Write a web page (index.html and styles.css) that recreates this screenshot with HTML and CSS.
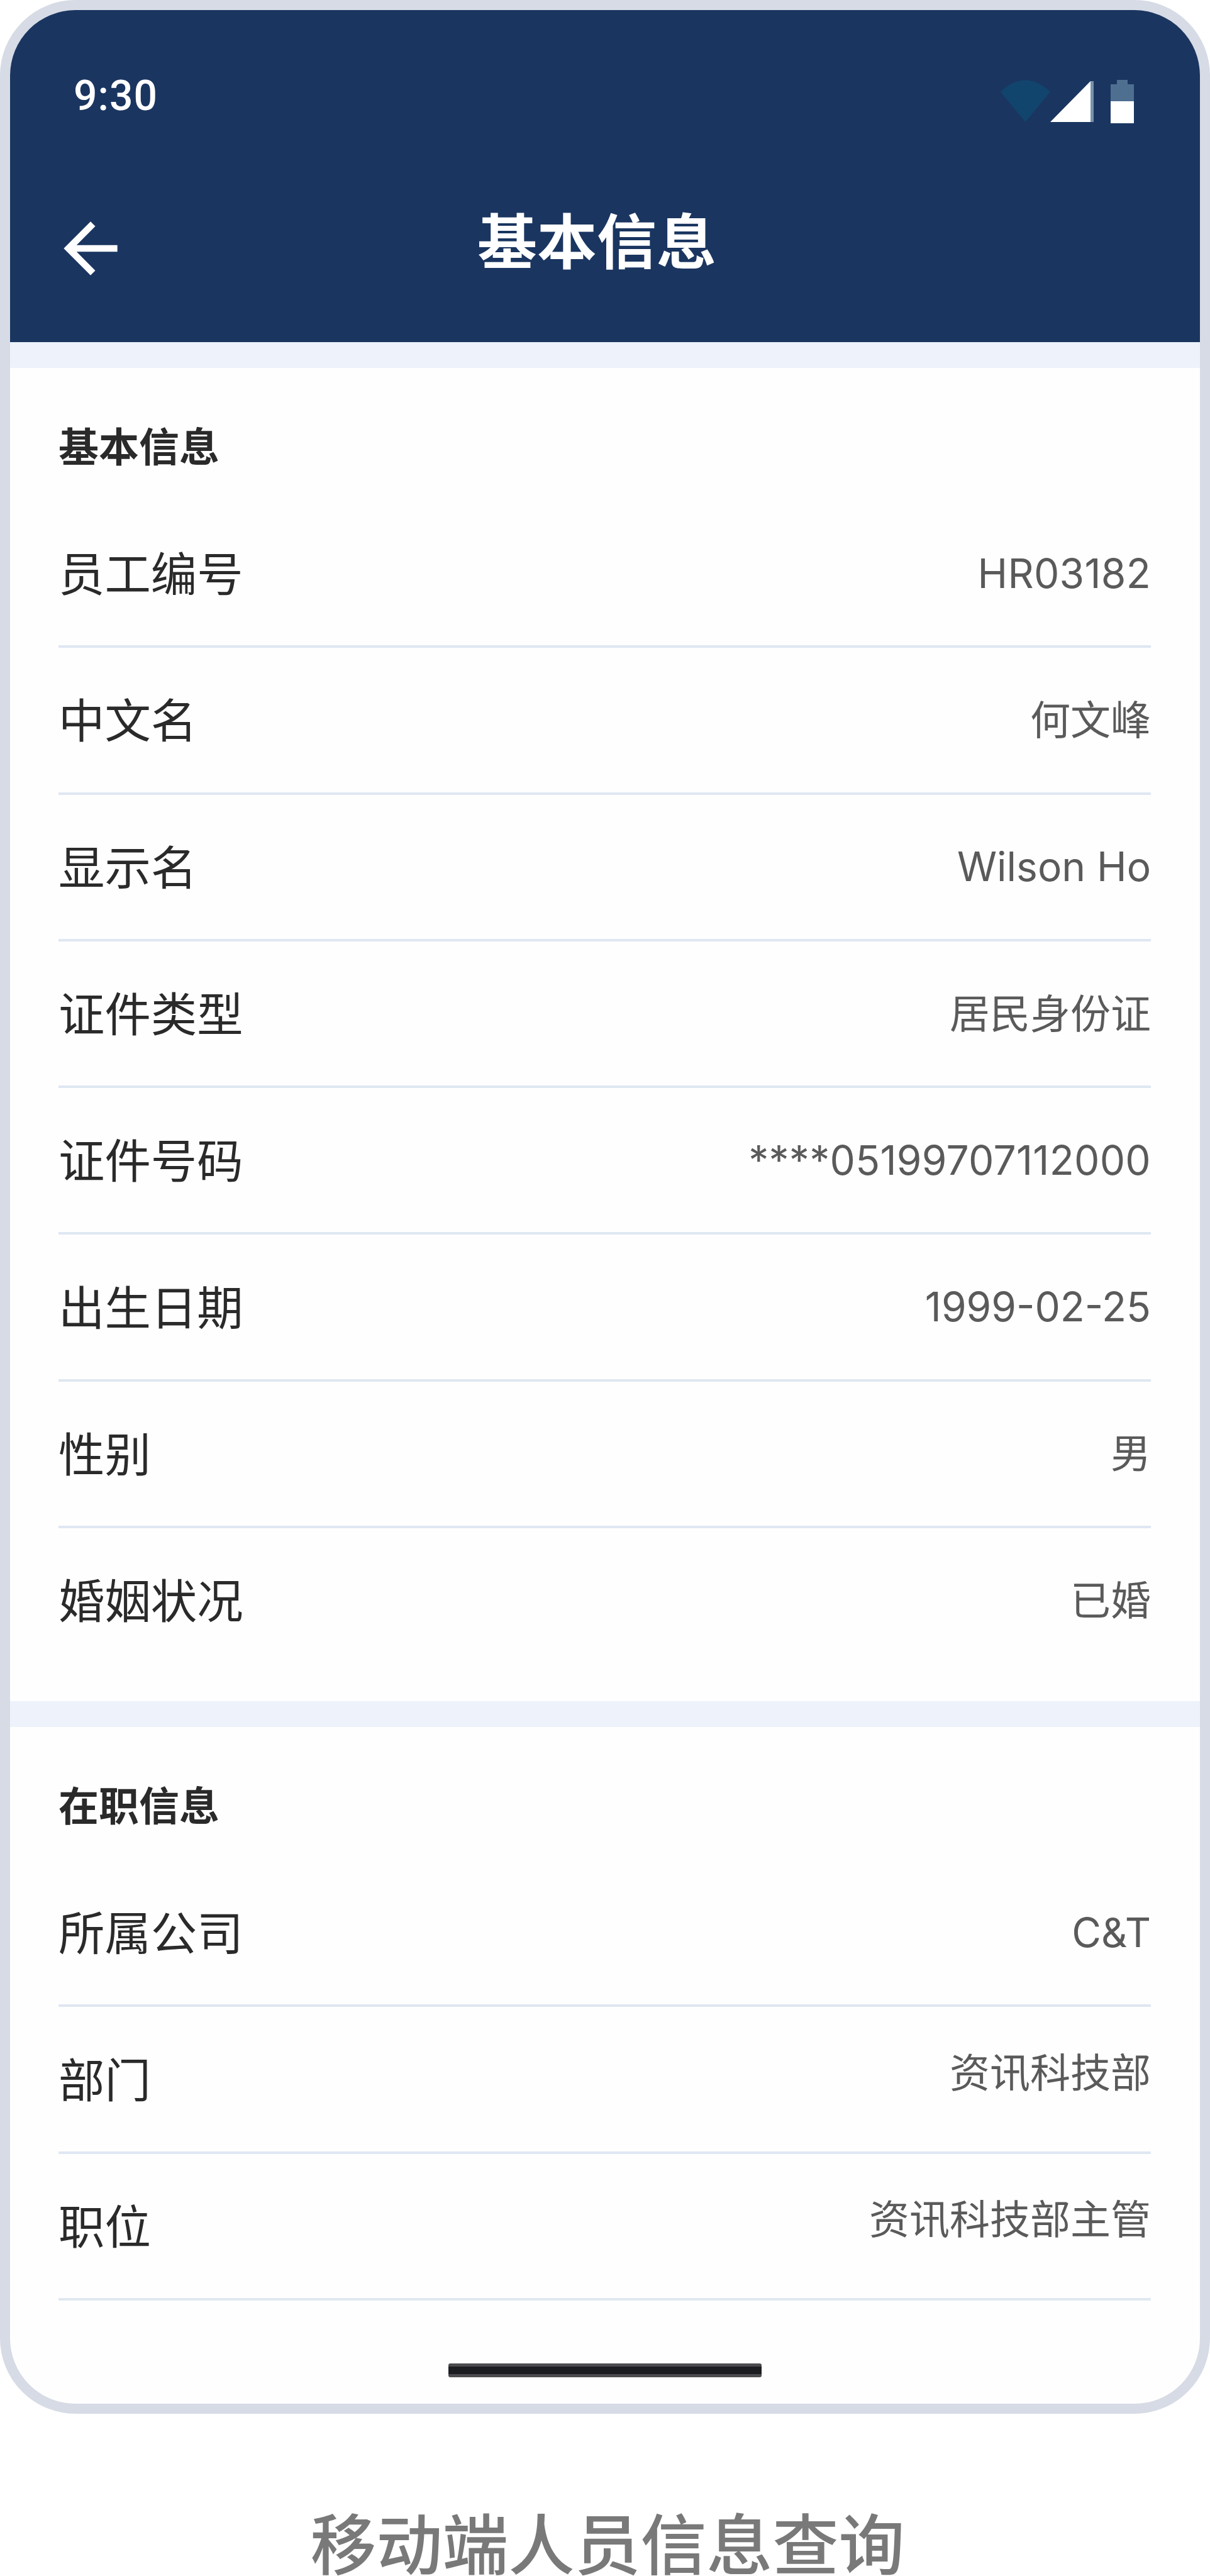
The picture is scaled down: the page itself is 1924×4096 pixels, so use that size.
FILE: index.html
```html
<!DOCTYPE html>
<html lang="zh-CN">
<head>
<meta charset="utf-8">
<title>基本信息</title>
<link rel="stylesheet" href="styles.css">
</head>
<body>
<main class="phone">
  <header class="header">
    <div class="status">
      <span class="clock">9:30</span>
      <svg class="status-icons" viewBox="0 0 214 72" width="214" height="72">
        <path fill="#12456e" d="M0 20Q39 -17 79 20L39.500 68Z"/>
        <path fill="#fff" d="M79 68L143 3V68Z"/>
        <path fill="#7892ab" d="M143 3h5v65h-5z"/>
        <path fill="#4f6f91" d="M185 1h17v7h10v28h-37V8h10z"/>
        <path fill="#fff" d="M175 35h37v35h-37z"/>
      </svg>
    </div>
    <div class="appbar">
      <svg class="back" viewBox="0 0 24 24" width="128" height="128"><path fill="#fff" d="M20 11H7.830l5.590-5.590L12 4l-8 8 8 8 1.410-1.410L7.830 13H20z"/></svg>
      <h1 class="title">基本信息</h1>
    </div>
  </header>
  <section class="section">
    <h2 class="heading">基本信息</h2>
    <dl class="list">
      <div class="row"><dt>员工编号</dt><dd class="numeric">HR03182</dd></div>
      <div class="row"><dt>中文名</dt><dd>何文峰</dd></div>
      <div class="row"><dt>显示名</dt><dd>Wilson Ho</dd></div>
      <div class="row"><dt>证件类型</dt><dd>居民身份证</dd></div>
      <div class="row"><dt>证件号码</dt><dd class="numeric">****05199707112000</dd></div>
      <div class="row"><dt>出生日期</dt><dd>1999-02-25</dd></div>
      <div class="row"><dt>性别</dt><dd>男</dd></div>
      <div class="row row-last"><dt>婚姻状况</dt><dd>已婚</dd></div>
    </dl>
  </section>
  <section class="section">
    <h2 class="heading">在职信息</h2>
    <dl class="list">
      <div class="row"><dt>所属公司</dt><dd>C&amp;T</dd></div>
      <div class="row"><dt>部门</dt><dd class="raised">资讯科技部</dd></div>
      <div class="row"><dt>职位</dt><dd class="raised">资讯科技部主管</dd></div>
    </dl>
  </section>
  <div class="home-bar"></div>
</main>
<p class="caption">移动端人员信息查询</p>
</body>
</html>
```
FILE: styles.css
```css
* { box-sizing: border-box; margin: 0; padding: 0; }
html, body { width: 1924px; height: 4096px; overflow: hidden; }
body { background: #fff; font-family: Inter, "Noto Sans CJK SC", sans-serif; }
.phone {
  width: 1924px; height: 3838px;
  display: flex; flex-direction: column;
  border: 16px solid #d6dbe5; border-radius: 120px;
  background: #fefefe; overflow: hidden;
}
.header { height: 528px; flex: none; background: #1a3560; color: #fff; }
.status {
  display: flex; justify-content: space-between; align-items: flex-start;
  padding: 97px 103px 0 101px; height: 290px;
}
.clock { font: 500 66px/80px Roboto, sans-serif; letter-spacing: 1px; }
.status-icons { margin-top: 13px; }
.appbar { display: grid; grid-template-columns: 128px 1fr 154px; padding: 0 64px; }
.back { margin-top: 25px; }
.title { padding-top: 10px; font-size: 95px; line-height: 140px; font-weight: 700; text-align: center; }
.section { flex: none; border-top: 41px solid #edf2fb; padding: 0 78px 0 77px; }
.heading { height: 212px; padding-top: 80px; font-size: 64px; line-height: 92px; font-weight: 700; color: #2a2a2a; }
.row {
  display: flex; justify-content: space-between; align-items: center;
  height: 233.3px; border-bottom: 4px solid #dfe7f2;
}
.row-last { border-bottom: 0; height: 275px; padding-bottom: 46px; }
.row dt { padding-top: 5px; font-size: 73.4px; line-height: 110px; color: #2a2a2a; }
.row dd { font-size: 64px; line-height: 96px; color: #5a5a5a; }
.row .numeric { letter-spacing: 0.3px; }
.row .raised { padding-bottom: 20px; }
.home-bar {
  width: 498px; height: 22px; margin: 100px auto 0;
  border: solid #4c4c4f; border-width: 5px 0; border-radius: 3px; background: #1c1d21;
}
.caption {
  margin-top: 161px; padding-left: 8px; text-align: center;
  font-size: 105px; line-height: 96px; font-weight: 500; color: #797979;
}
```
